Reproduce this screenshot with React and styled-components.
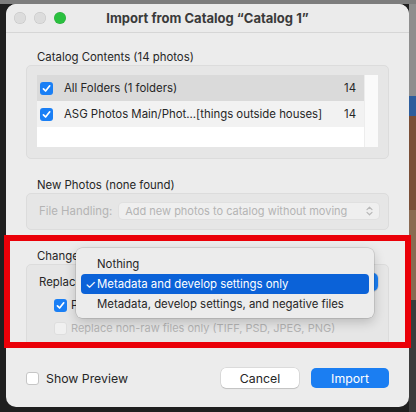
import React from "react";
import styled, { createGlobalStyle } from "styled-components";

const Global = createGlobalStyle`
  html, body { margin: 0; padding: 0; }
  body { font-family: Inter, "Noto Sans", "Liberation Sans", sans-serif; -webkit-font-smoothing: antialiased; }
`;

const Screen = styled.div`
  position: relative;
  width: 416px;
  height: 412px;
  overflow: hidden;
  display: flex;
  align-items: flex-start;
  white-space: nowrap;
  background:
    linear-gradient(#7d7d7d, #7d7d7d) top left / 100% 4px no-repeat,
    linear-gradient(to bottom, #8e8e8e 0 96px, #2d5d9c 96px 116px, #7a4e36 116px 210px, #8a6a52 210px 300px, #3b3b3b 300px) top right / 7px 100% no-repeat,
    #1f1f1f;
  color: #262626;
  font-size: 11.4px;
`;

const Dialog = styled.div`
  position: relative;
  margin: 4px 0 0 6px;
  width: 403px;
  height: 403px;
  border-radius: 10px;
  overflow: hidden;
  background: #ececec;
  display: flex;
  flex-direction: column;
`;

const TitleBar = styled.div`
  height: 28px;
  display: grid;
  grid-template-columns: 1fr auto 1fr;
  align-items: center;
  border-bottom: 1px solid #d6d6d6;
  background: #ebebeb;
`;

const Lights = styled.div`
  display: flex;
  gap: 8px;
  padding-left: 8px;
`;

const Light = styled.span`
  width: 12px;
  height: 12px;
  border-radius: 50%;
  background: ${(p) => p.$c};
  box-shadow: inset 0 0 0 0.5px rgba(0, 0, 0, 0.12);
`;

const Title = styled.div`
  font-weight: 700;
  font-size: 13px;
  color: #3a3a3a;
`;

const Body = styled.div`
  padding: 0 20px;
  display: flex;
  flex-direction: column;
`;

const SectionLabel = styled.div`
  margin-top: ${(p) => p.$mt || 18}px;
  padding-left: 11px;
  height: 16px;
  line-height: 16px;
`;

const GroupBox = styled.div`
  border: 1px solid #dcdcdc;
  border-radius: 5px;
  background: #e6e6e6;
  padding: ${(p) => p.$pad};
  height: ${(p) => (p.$h ? p.$h + "px" : "auto")};
  box-sizing: border-box;
`;

const List = styled.div`
  height: 72px;
  background: #ffffff;
  display: grid;
  grid-template-columns: 1fr 14px;
`;

const Rows = styled.div`
  display: flex;
  flex-direction: column;
`;

const Row = styled.div`
  height: 26px;
  display: flex;
  align-items: center;
  padding: 0 8px 0 3px;
  background: ${(p) => p.$bg};
`;

const RowText = styled.span`
  margin-left: 11px;
  flex: 1;
`;

const Count = styled.span`
  width: 20px;
  text-align: right;
`;

const ScrollTrack = styled.div`
  background: #fafafa;
  border-left: 1px solid #ededed;
`;

const Box = styled.span`
  width: 13px;
  height: 13px;
  border-radius: 3px;
  display: inline-flex;
  align-items: center;
  justify-content: center;
  flex-shrink: 0;
  box-sizing: border-box;
  background: ${(p) => (p.$on ? "#1a7ff5" : p.$disabled ? "#f0f0f0" : "#ffffff")};
  border: ${(p) => (p.$on ? "none" : p.$disabled ? "1px solid #dedede" : "1px solid #c6c6c6")};
`;

const Check = ({ on, disabled }) => (
  <Box $on={on} $disabled={disabled}>
    {on && (
      <svg width="9" height="9" viewBox="0 0 10 10">
        <path d="M1.6 5.4 L4 7.8 L8.6 2" fill="none" stroke="#fff" strokeWidth="1.9" strokeLinecap="round" strokeLinejoin="round" />
      </svg>
    )}
  </Box>
);

const FieldRow = styled.div`
  display: flex;
  align-items: center;
  height: 16px;
  padding-left: ${(p) => p.$pl || 0}px;
  margin-top: ${(p) => p.$mt || 0}px;
`;

const Disabled = styled.span`
  color: #b4b4b4;
  font-size: ${(p) => p.$fs || "inherit"};
`;

const Popup = styled.div`
  margin-left: 7px;
  flex: 1;
  height: 16px;
  border-radius: 4px;
  background: #efefef;
  box-shadow: 0 0 0 1px #e0e0e0;
  display: flex;
  align-items: center;
  padding: 0 6px;
  color: #b4b4b4;
  font-size: 11px;
  justify-content: space-between;
`;

const BluePopup = styled.div`
  margin-left: 8px;
  flex: 1;
  height: 18px;
  border-radius: 5px;
  background: #ffffff;
  box-shadow: 0 0 0 0.5px rgba(0,0,0,0.15), 0 1px 1px rgba(0,0,0,0.08);
  display: flex;
  justify-content: flex-end;
`;

const BlueEnd = styled.span`
  width: 16px;
  height: 18px;
  border-radius: 5px;
  background: #1a7ff5;
`;

const Chevrons = ({ color = "#b8b8b8" }) => (
  <svg width="7" height="10" viewBox="0 0 7 10">
    <path d="M1 3.6 L3.5 1.2 L6 3.6 M1 6.4 L3.5 8.8 L6 6.4" fill="none" stroke={color} strokeWidth="1.2" strokeLinecap="round" strokeLinejoin="round" />
  </svg>
);

const CheckLabel = styled.span`
  margin-left: 4px;
`;

const Footer = styled.div`
  margin-top: auto;
  padding: 0 20px 19px 20px;
  display: flex;
  align-items: center;
`;

const PreviewLabel = styled.span`
  margin-left: 7px;
  font-size: 12.3px;
  flex: 1;
`;

const Button = styled.button`
  width: 78px;
  height: 20px;
  border: none;
  border-radius: 5px;
  font-family: inherit;
  font-size: 12.3px;
  margin-left: ${(p) => p.$ml || 0}px;
  padding: 0;
  background: ${(p) => (p.$primary ? "#1b7ef2" : "#ffffff")};
  color: ${(p) => (p.$primary ? "#ffffff" : "#262626")};
  box-shadow: ${(p) => (p.$primary ? "none" : "0 0 0 0.5px rgba(0,0,0,0.14), 0 1px 1px rgba(0,0,0,0.12)")};
`;

const Menu = styled.div`
  position: absolute;
  left: 70px;
  top: 244px;
  width: 298px;
  height: 70px;
  box-sizing: border-box;
  padding: 6px 5px 4px;
  border-radius: 6px;
  background: #ececec;
  box-shadow: 0 0 0 0.5px rgba(0, 0, 0, 0.18), 0 4px 12px rgba(0, 0, 0, 0.2);
  display: flex;
  flex-direction: column;
`;

const MenuItem = styled.div`
  height: 20px;
  border-radius: 4px;
  display: flex;
  align-items: center;
  padding-left: 16px;
  position: relative;
  background: ${(p) => (p.$active ? "#0b62d8" : "transparent")};
  color: ${(p) => (p.$active ? "#ffffff" : "#262626")};
`;

const Tick = styled.span`
  position: absolute;
  left: 4px;
  font-size: 12.5px;
`;

const Annotation = styled.div`
  position: absolute;
  left: 4px;
  top: 235px;
  width: 407px;
  height: 113px;
  box-sizing: border-box;
  border: 6px solid #ea0008;
  pointer-events: none;
`;

export default function App() {
  return (
    <>
      <Global />
      <Screen>
        <Dialog>
          <TitleBar>
            <Lights>
              <Light $c="#dcdcdc" />
              <Light $c="#dcdcdc" />
              <Light $c="#2ac03f" />
            </Lights>
            <Title>Import from Catalog “Catalog 1”</Title>
            <span />
          </TitleBar>
          <Body>
            <SectionLabel $mt={16}>Catalog Contents (14 photos)</SectionLabel>
            <GroupBox $pad="9px 10px 11px 10px">
              <List>
                <Rows>
                  <Row $bg="#dadada">
                    <Check on />
                    <RowText>All Folders (1 folders)</RowText>
                    <Count>14</Count>
                  </Row>
                  <Row $bg="#f2f2f2">
                    <Check on />
                    <RowText>ASG Photos Main/Phot...[things outside houses]</RowText>
                    <Count>14</Count>
                  </Row>
                </Rows>
                <ScrollTrack />
              </List>
            </GroupBox>

            <SectionLabel>New Photos (none found)</SectionLabel>
            <GroupBox $pad="9px 9px 0 12px" $h={37}>
              <FieldRow>
                <Disabled>File Handling:</Disabled>
                <Popup>
                  <span>Add new photos to catalog without moving</span>
                  <Chevrons />
                </Popup>
              </FieldRow>
            </GroupBox>

            <SectionLabel>Changed Existing Photos</SectionLabel>
            <GroupBox $pad="9px 10px 0 12px" $h={82}>
              <FieldRow>
                <span>Replace:</span>
                <BluePopup>
                  <BlueEnd />
                </BluePopup>
              </FieldRow>
              <FieldRow $pl={15} $mt={7}>
                <Check on />
                <CheckLabel>Preserve old settings as a virtual copy</CheckLabel>
              </FieldRow>
              <FieldRow $pl={15} $mt={7}>
                <Check disabled />
                <CheckLabel>
                  <Disabled $fs="11px">Replace non-raw files only (TIFF, PSD, JPEG, PNG)</Disabled>
                </CheckLabel>
              </FieldRow>
            </GroupBox>
          </Body>
          <Footer>
            <Check />
            <PreviewLabel>Show Preview</PreviewLabel>
            <Button>Cancel</Button>
            <Button $primary $ml={12}>Import</Button>
          </Footer>
          <Menu>
            <MenuItem>Nothing</MenuItem>
            <MenuItem $active>
              <Tick>✓</Tick>Metadata and develop settings only
            </MenuItem>
            <MenuItem>Metadata, develop settings, and negative files</MenuItem>
          </Menu>
        </Dialog>
        <Annotation />
      </Screen>
    </>
  );
}
